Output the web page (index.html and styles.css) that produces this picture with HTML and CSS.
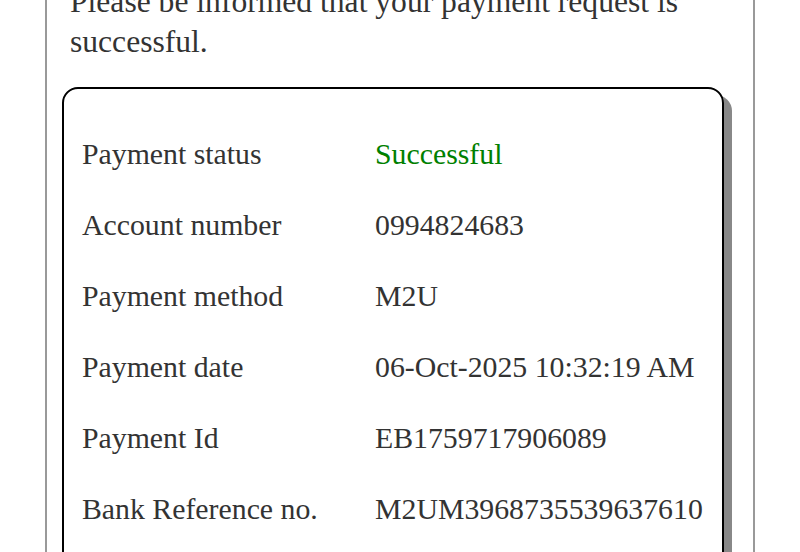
FILE: index.html
```html
<!DOCTYPE html>
<html>
<head>
<meta charset="utf-8">
<link rel="stylesheet" href="styles.css">
</head>
<body>
<div class="page">
  <p class="intro">Please be informed that your payment request is successful.</p>
  <div class="card">
    <div class="row"><span class="label">Payment status</span><span class="value success">Successful</span></div>
    <div class="row"><span class="label">Account number</span><span class="value">0994824683</span></div>
    <div class="row"><span class="label">Payment method</span><span class="value">M2U</span></div>
    <div class="row"><span class="label">Payment date</span><span class="value">06-Oct-2025 10:32:19 AM</span></div>
    <div class="row"><span class="label">Payment Id</span><span class="value">EB1759717906089</span></div>
    <div class="row"><span class="label">Bank Reference no.</span><span class="value">M2UM3968735539637610</span></div>
  </div>
</div>
</body>
</html>
```
FILE: styles.css
```css
html, body {
  margin: 0;
  padding: 0;
  background: #fff;
  overflow: hidden;
}
body {
  font-family: "Liberation Serif", "Times New Roman", serif;
  color: #333;
}
.page {
  width: 710px;
  margin: -18px auto 0;
  border-left: 2px solid #999;
  border-right: 2px solid #999;
  padding: 0 0 40px 15px;
  box-sizing: border-box;
}
.intro {
  margin: 0 29px 25px 8px;
  font-size: 31.6px;
  line-height: 40px;
}
.card {
  width: 640px;
  border: 2px solid #000;
  border-radius: 16px;
  box-shadow: 8px 8px 0 #888;
  padding: 29px 0 60px 18px;
  box-sizing: content-box;
}
.row {
  display: grid;
  grid-template-columns: 293px auto;
  font-size: 29.8px;
  line-height: 35px;
  padding: 18px 0;
}
.success {
  color: #008000;
}
```
